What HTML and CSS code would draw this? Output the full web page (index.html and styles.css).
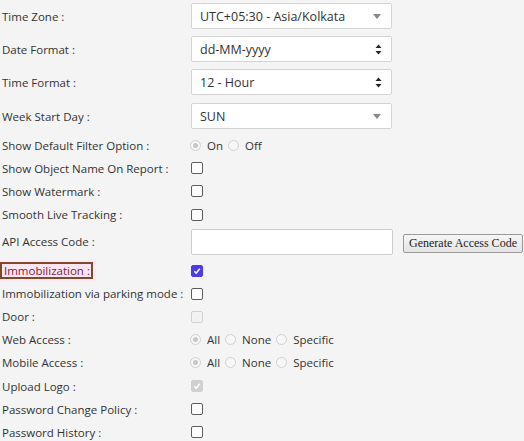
FILE: index.html
```html
<!DOCTYPE html>
<html>
<head>
<meta charset="utf-8">
<link rel="stylesheet" href="styles.css">
</head>
<body>
<div class="form">
  <div class="row row-select first">
    <div class="lbl">Time Zone :</div>
    <div class="ctrl"><div class="select"><span>UTC+05:30 - Asia/Kolkata</span><span class="tri"></span></div></div>
  </div>
  <div class="row row-select">
    <div class="lbl">Date Format :</div>
    <div class="ctrl"><div class="select"><span>dd-MM-yyyy</span><svg class="updown" width="7" height="11" viewBox="0 0 7 11"><path d="M3.5 0.5 L6.5 4 L0.5 4 Z M3.5 10.5 L6.5 7 L0.5 7 Z" fill="#222"/></svg></div></div>
  </div>
  <div class="row row-select">
    <div class="lbl">Time Format :</div>
    <div class="ctrl"><div class="select"><span>12 - Hour</span><svg class="updown" width="7" height="11" viewBox="0 0 7 11"><path d="M3.5 0.5 L6.5 4 L0.5 4 Z M3.5 10.5 L6.5 7 L0.5 7 Z" fill="#222"/></svg></div></div>
  </div>
  <div class="row row-select week">
    <div class="lbl">Week Start Day :</div>
    <div class="ctrl"><div class="select"><span>SUN</span><span class="tri"></span></div></div>
  </div>

  <div class="group1">
    <div class="row">
      <div class="lbl">Show Default Filter Option :</div>
      <div class="ctrl radios"><span class="radio on"></span><span class="opt">On</span><span class="radio"></span><span class="opt">Off</span></div>
    </div>
    <div class="row">
      <div class="lbl">Show Object Name On Report :</div>
      <div class="ctrl"><span class="cb"></span></div>
    </div>
    <div class="row">
      <div class="lbl">Show Watermark :</div>
      <div class="ctrl"><span class="cb"></span></div>
    </div>
    <div class="row">
      <div class="lbl">Smooth Live Tracking :</div>
      <div class="ctrl"><span class="cb"></span></div>
    </div>
  </div>

  <div class="row row-api">
    <div class="lbl">API Access Code :</div>
    <div class="ctrl"><div class="input"></div><button class="gen">Generate Access Code</button></div>
  </div>

  <div class="group2">
    <div class="row">
      <div class="lbl"><span class="hl">Immobilization :</span></div>
      <div class="ctrl"><span class="cb checked"><svg width="12" height="12" viewBox="0 0 12 12"><path d="M2.8 6.2 L5 8.6 L9.3 3.3" fill="none" stroke="#fff" stroke-width="1.8"/></svg></span></div>
    </div>
    <div class="row">
      <div class="lbl">Immobilization via parking mode :</div>
      <div class="ctrl"><span class="cb"></span></div>
    </div>
    <div class="row">
      <div class="lbl">Door :</div>
      <div class="ctrl"><span class="cb disabled"></span></div>
    </div>
    <div class="row">
      <div class="lbl">Web Access :</div>
      <div class="ctrl radios"><span class="radio on"></span><span class="opt">All</span><span class="radio"></span><span class="opt">None</span><span class="radio"></span><span class="opt">Specific</span></div>
    </div>
    <div class="row">
      <div class="lbl">Mobile Access :</div>
      <div class="ctrl radios"><span class="radio on"></span><span class="opt">All</span><span class="radio"></span><span class="opt">None</span><span class="radio"></span><span class="opt">Specific</span></div>
    </div>
    <div class="row">
      <div class="lbl">Upload Logo :</div>
      <div class="ctrl"><span class="cb disabled-checked"><svg width="12" height="12" viewBox="0 0 12 12"><path d="M2.8 6.2 L5 8.6 L9.3 3.3" fill="none" stroke="#fff" stroke-width="1.6"/></svg></span></div>
    </div>
    <div class="row">
      <div class="lbl">Password Change Policy :</div>
      <div class="ctrl"><span class="cb"></span></div>
    </div>
    <div class="row">
      <div class="lbl">Password History :</div>
      <div class="ctrl"><span class="cb"></span></div>
    </div>
  </div>
</div>
</body>
</html>
```
FILE: styles.css
```css
html, body {
  margin: 0;
  padding: 0;
  background: #f4f4f4;
}
body {
  font-family: "Open Sans", "Liberation Sans", sans-serif;
  font-size: 11.5px;
  color: #333;
}
.form {
  display: flex;
  flex-direction: column;
  padding-top: 3px;
}
.row {
  display: flex;
  align-items: center;
  height: 23.2px;
}
.lbl {
  width: 189px;
  padding-left: 2px;
  box-sizing: border-box;
  white-space: nowrap;
}
.ctrl {
  display: flex;
  align-items: center;
  padding-left: 2px;
}
.row-select {
  height: 26px;
  margin-bottom: 7px;
}
.row-select.week {
  margin-top: 1px;
  margin-bottom: 0;
}
.select {
  width: 201px;
  height: 26px;
  box-sizing: border-box;
  background: #fff;
  border: 1px solid #d4d4d4;
  border-radius: 2px;
  display: flex;
  align-items: center;
  justify-content: space-between;
  padding: 0 9px 0 8px;
  font-size: 12.5px;
  color: #333;
}
.tri {
  width: 0;
  height: 0;
  border-left: 4px solid transparent;
  border-right: 4px solid transparent;
  border-top: 5px solid #888;
  margin-right: 1px;
}
.group1 {
  margin-top: 4.5px;
}
.row-api {
  height: 26px;
  margin-top: 2.3px;
}
.input {
  width: 202px;
  height: 26px;
  box-sizing: border-box;
  background: #fff;
  border: 1px solid #ccc;
  border-radius: 2px;
}
.gen {
  margin-left: 10px;
  margin-top: 4px;
  height: 19px;
  padding: 0 5px;
  font-family: "Liberation Serif", serif;
  font-size: 12px;
  color: #222;
  background: linear-gradient(#f6f6f6, #e4e4e4);
  border: 1px solid #9a9a9a;
  border-radius: 2px;
  white-space: nowrap;
}
.group2 {
  margin-top: 4.5px;
}
.group2 .row {
  height: 23.1px;
}
.cb {
  width: 12px;
  height: 12px;
  box-sizing: border-box;
  border: 1px solid #5d5d5d;
  border-radius: 2px;
  background: #fff;
  display: inline-flex;
  align-items: center;
  justify-content: center;
}
.cb svg {
  display: block;
}
.cb.checked {
  background: #4b3de3;
  border-color: #4b3de3;
}
.cb.disabled {
  border-color: #d2d2d2;
  background: #f2f2f2;
}
.cb.disabled-checked {
  border-color: #d0d0d0;
  background: #d0d0d0;
}
.radios {
  padding-left: 1px;
}
.radio {
  width: 11px;
  height: 11px;
  box-sizing: border-box;
  border: 1px solid #d0d0d0;
  border-radius: 50%;
  background: #f7f7f7;
  display: inline-flex;
  align-items: center;
  justify-content: center;
}
.radio.on::after {
  content: "";
  width: 5px;
  height: 5px;
  border-radius: 50%;
  background: #c8c8c8;
}
.opt {
  margin-left: 6px;
  margin-right: 5px;
}
.hl {
  display: inline-block;
  margin-left: -2px;
  padding: 0 1px 0 2px;
  line-height: 13px;
  border: 2px solid #7e4a2b;
  background: #fde6f2;
  box-shadow: 0 0 0 3px #fdeaf4;
  color: #7a1d3c;
}
```
